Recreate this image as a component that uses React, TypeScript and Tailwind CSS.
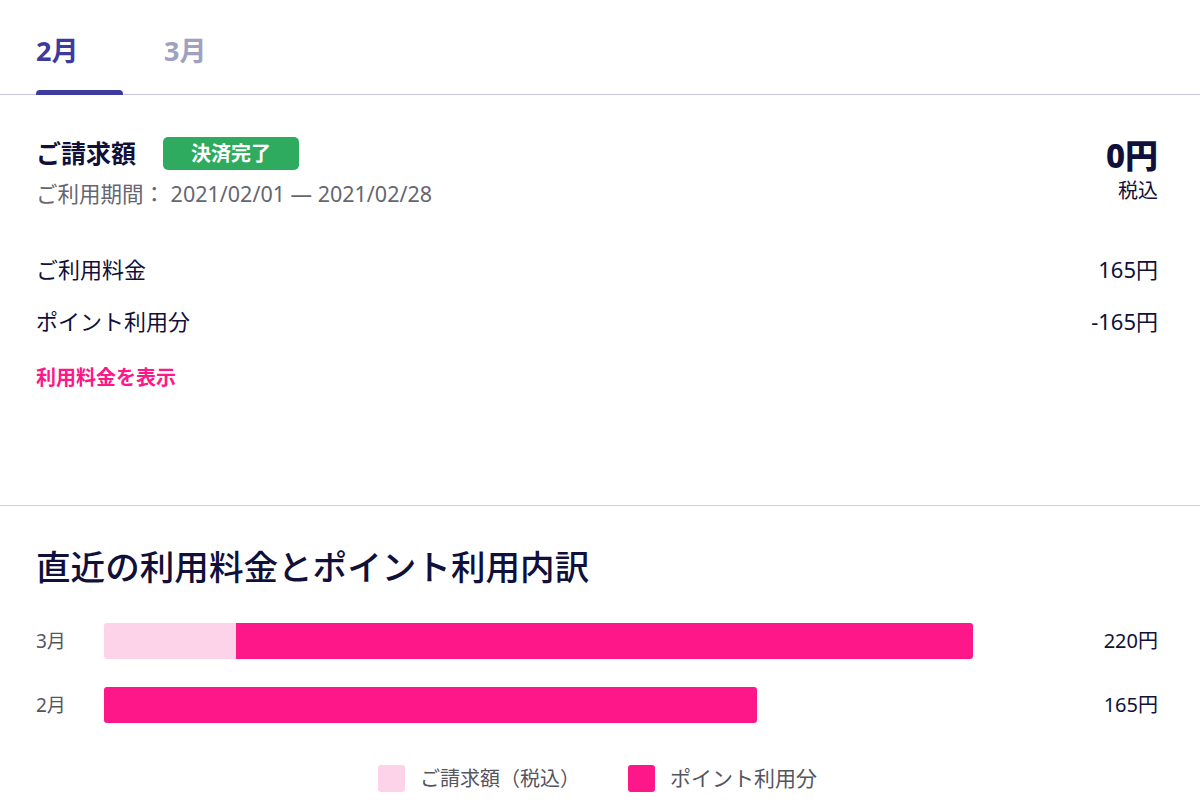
import React from "react";

const font = "font-['Noto_Sans','Noto_Sans_CJK_JP',sans-serif]";

export default function App() {
  return (
    <div className={`w-[1200px] h-[812px] bg-white overflow-hidden text-[#10103a] ${font}`}>
      {/* Tabs */}
      <div className="h-[95px] border-b border-[#c9c9e0] flex gap-[41px] pl-[36px]">
        <div className="relative w-[87px] h-full pt-[37px]">
          <span className="block text-[27px] leading-[27px] font-bold text-[#3b3ba0]">2月</span>
          <div className="absolute left-0 right-0 bottom-[-1px] h-[5px] rounded-t-[4px] bg-[#3b3ba0]" />
        </div>
        <div className="relative w-[87px] h-full pt-[37px]">
          <span className="block text-[27px] leading-[27px] font-bold text-[#a0a0c0]">3月</span>
        </div>
      </div>

      {/* Billing section */}
      <div className="pl-[36px] pr-[42px] pb-[117px] border-b border-[#cfcfdc]">
        <div className="flex justify-between items-start mt-[42px]">
          <div>
            <div className="flex items-center h-[33px] gap-[27px]">
              <span className="text-[25px] leading-[25px] font-bold">ご請求額</span>
              <span className="h-[33px] px-[28px] rounded-[5px] bg-[#2eab5f] text-white text-[20px] font-bold flex items-center">決済完了</span>
            </div>
            <div className="mt-[13px] text-[21.5px] leading-[22px] text-[#666670]">
              ご利用期間：&nbsp;2021/02/01 — 2021/02/28
            </div>
          </div>
          <div className="flex flex-col items-end">
            <span className="mt-[3px] text-[33px] leading-[32px] font-extrabold">0円</span>
            <span className="mt-[9px] text-[20px] leading-[20px]">税込</span>
          </div>
        </div>
        <div className="mt-[53px] flex justify-between text-[22px] leading-[22px]">
          <span>ご利用料金</span>
          <span>165円</span>
        </div>
        <div className="mt-[30px] flex justify-between text-[22px] leading-[22px]">
          <span>ポイント利用分</span>
          <span>-165円</span>
        </div>
        <div className="mt-[36px] text-[20px] leading-[20px] font-bold text-[#fe1788]">利用料金を表示</div>
      </div>

      {/* Chart section */}
      <div className="pl-[36px] pr-[42px]">
        <h2 className="mt-[44px] text-[34.6px] leading-[34px] font-medium">直近の利用料金とポイント利用内訳</h2>
        <div className="mt-[39px] flex items-center h-[36px]">
          <span className="w-[68px] text-[19px] text-[#555560]">3月</span>
          <div className="w-[869px] h-[36px] flex">
            <div className="w-[132px] h-full bg-[#fdd3ea] rounded-l-[3px]" />
            <div className="w-[737px] h-full bg-[#fe1788] rounded-r-[3px]" />
          </div>
          <span className="flex-1 text-right text-[20px]">220円</span>
        </div>
        <div className="mt-[28px] flex items-center h-[36px]">
          <span className="w-[68px] text-[19px] text-[#555560]">2月</span>
          <div className="w-[869px] h-[36px] flex">
            <div className="w-[653px] h-full bg-[#fe1788] rounded-[3px]" />
          </div>
          <span className="flex-1 text-right text-[20px]">165円</span>
        </div>
        <div className="mt-[40px] flex justify-center items-center gap-[48px] ml-[1px]">
          <div className="flex items-center gap-[15px]">
            <div className="w-[27px] h-[27px] rounded-[3px] bg-[#fdd3ea]" />
            <span className="text-[20px] text-[#555560]">ご請求額（税込）</span>
          </div>
          <div className="flex items-center gap-[15px]">
            <div className="w-[27px] h-[27px] rounded-[3px] bg-[#fe1788]" />
            <span className="text-[21px] text-[#555560]">ポイント利用分</span>
          </div>
        </div>
      </div>
    </div>
  );
}
